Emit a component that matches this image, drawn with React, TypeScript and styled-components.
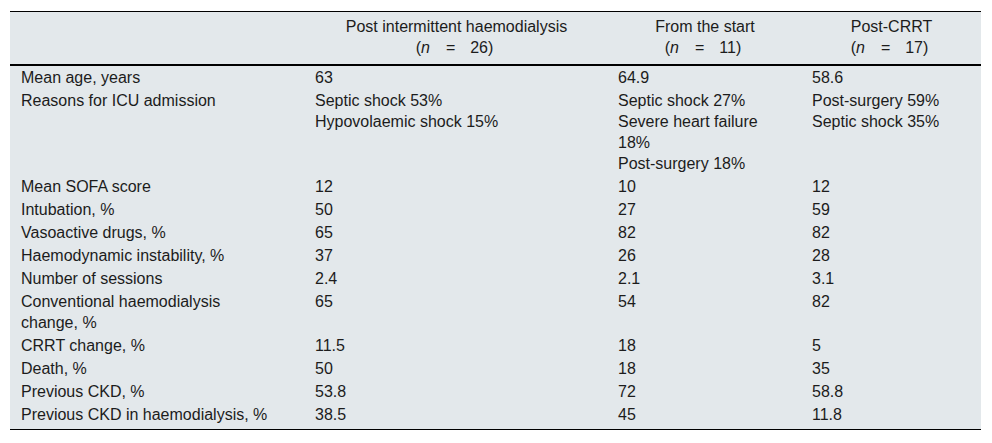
import React from 'react';
import styled, { createGlobalStyle } from 'styled-components';

interface Row {
  label: string[];
  values: string[][];
}

const groups = [
  { title: 'Post intermittent haemodialysis', n: '26' },
  { title: 'From the start', n: '11' },
  { title: 'Post-CRRT', n: '17' },
];

const rows: Row[] = [
  { label: ['Mean age, years'], values: [['63'], ['64.9'], ['58.6']] },
  {
    label: ['Reasons for ICU admission'],
    values: [
      ['Septic shock 53%', 'Hypovolaemic shock 15%'],
      ['Septic shock 27%', 'Severe heart failure', '18%', 'Post-surgery 18%'],
      ['Post-surgery 59%', 'Septic shock 35%'],
    ],
  },
  { label: ['Mean SOFA score'], values: [['12'], ['10'], ['12']] },
  { label: ['Intubation, %'], values: [['50'], ['27'], ['59']] },
  { label: ['Vasoactive drugs, %'], values: [['65'], ['82'], ['82']] },
  { label: ['Haemodynamic instability, %'], values: [['37'], ['26'], ['28']] },
  { label: ['Number of sessions'], values: [['2.4'], ['2.1'], ['3.1']] },
  {
    label: ['Conventional haemodialysis', 'change, %'],
    values: [['65'], ['54'], ['82']],
  },
  { label: ['CRRT change, %'], values: [['11.5'], ['18'], ['5']] },
  { label: ['Death, %'], values: [['50'], ['18'], ['35']] },
  { label: ['Previous CKD, %'], values: [['53.8'], ['72'], ['58.8']] },
  {
    label: ['Previous CKD in haemodialysis, %'],
    values: [['38.5'], ['45'], ['11.8']],
  },
];

const App = () => {
  return (
    <Page>
      <GlobalStyle />
      <Frame role="table">
        <Rule $size={1} />
        <HeadRow role="row">
          <HeadCell role="columnheader" />
          {groups.map((g) => (
            <HeadCell role="columnheader" key={g.title}>
              <Line>{g.title}</Line>
              <Line>
                (<Var>n</Var>
                <Op>=</Op>
                {g.n})<Trail />
              </Line>
            </HeadCell>
          ))}
        </HeadRow>
        <Rule $size={2} />
        {rows.map((row, i) => (
          <BodyRow role="row" key={i} $last={i === rows.length - 1}>
            <Cell role="cell" $first>
              {row.label.map((l) => (
                <Line key={l}>{l}</Line>
              ))}
            </Cell>
            {row.values.map((v, j) => (
              <Cell role="cell" key={j}>
                {v.map((l) => (
                  <Line key={l}>{l}</Line>
                ))}
              </Cell>
            ))}
          </BodyRow>
        ))}
        <Rule $size={1} />
      </Frame>
    </Page>
  );
};

export default App;

const GlobalStyle = createGlobalStyle`
  body {
    margin: 0;
    background: #ffffff;
    font-family: "Liberation Sans", Arial, sans-serif;
    color: #1c1c1c;
  }
`;

const Page = styled.div`
  padding: 11px 11px 0 10px;
`;

const Frame = styled.div`
  width: 971px;
  background-color: #e3e8eb;
  font-size: 16px;
  line-height: 21px;
`;

const Rule = styled.div<{ $size: number }>`
  height: ${({ $size }) => $size}px;
  background-color: #000;
`;

const HeadRow = styled.div`
  display: grid;
  grid-template-columns: 295px 303px 194px 179px;
  padding: 4px 0 6px;
`;

const HeadCell = styled.div`
  padding: 0 10px;
  text-align: center;
`;

const BodyRow = styled.div<{ $last?: boolean }>`
  display: grid;
  grid-template-columns: 295px 303px 194px 179px;
  padding-top: 1px;
  padding-bottom: ${({ $last }) => ($last ? '4px' : '1px')};
`;

const Cell = styled.div<{ $first?: boolean }>`
  padding: 0 10px 0 ${({ $first }) => ($first ? '11px' : '10px')};
`;

const Line = styled.div`
  white-space: nowrap;
`;

const Var = styled.i`
  font-style: italic;
`;

const Op = styled.span`
  margin: 0 15px 0 16px;
`;

const Trail = styled.span`
  display: inline-block;
  width: 4px;
`;
